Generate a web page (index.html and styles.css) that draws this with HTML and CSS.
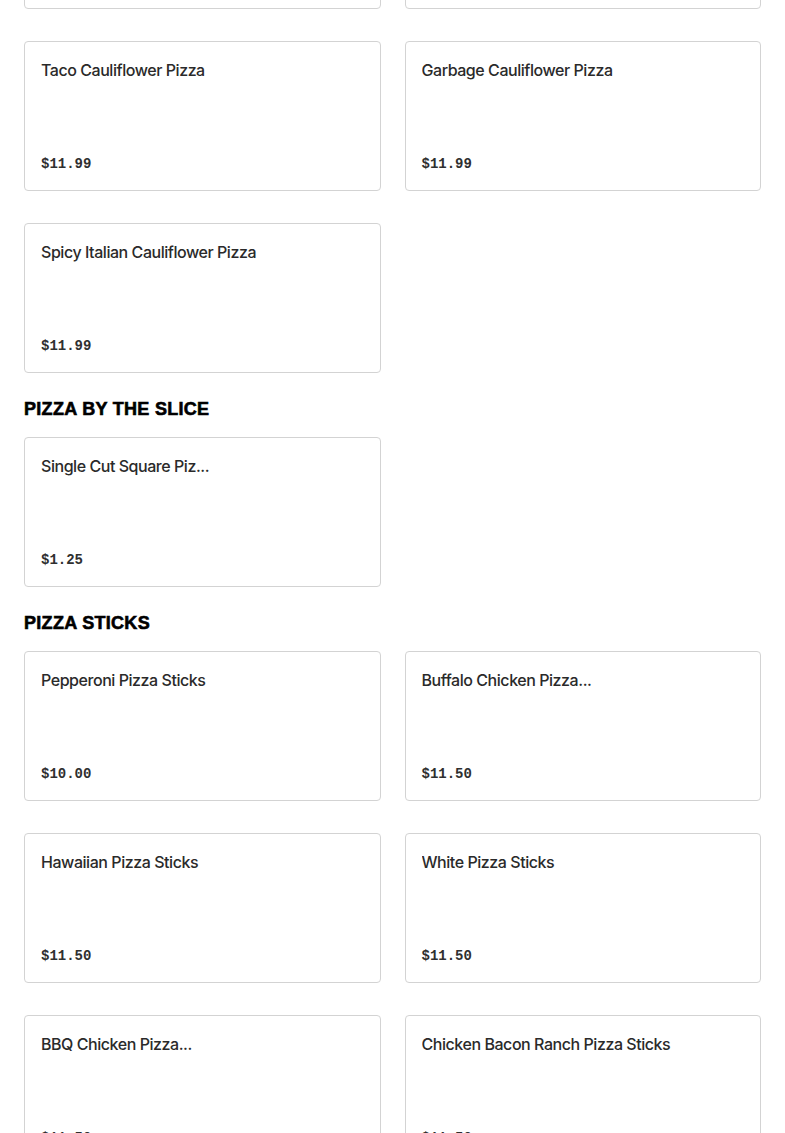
FILE: index.html
```html
<!DOCTYPE html>
<html lang="en">
<head>
<meta charset="utf-8">
<title>Menu</title>
<link rel="stylesheet" href="styles.css">
</head>
<body>
<main class="menu">
  <section class="section section-first">
    <div class="grid">
      <div class="card"><div class="title">Cauliflower Pizza</div><div class="price">$11.99</div></div>
      <div class="card"><div class="title">Veggie Cauliflower Pizza</div><div class="price">$11.99</div></div>
      <div class="card"><div class="title">Taco Cauliflower Pizza</div><div class="price">$11.99</div></div>
      <div class="card"><div class="title">Garbage Cauliflower Pizza</div><div class="price">$11.99</div></div>
      <div class="card"><div class="title">Spicy Italian Cauliflower Pizza</div><div class="price">$11.99</div></div>
    </div>
  </section>
  <section class="section">
    <h2 class="heading">PIZZA BY THE SLICE</h2>
    <div class="grid">
      <div class="card"><div class="title">Single Cut Square Piz...</div><div class="price">$1.25</div></div>
    </div>
  </section>
  <section class="section">
    <h2 class="heading">PIZZA STICKS</h2>
    <div class="grid">
      <div class="card"><div class="title">Pepperoni Pizza Sticks</div><div class="price">$10.00</div></div>
      <div class="card"><div class="title">Buffalo Chicken Pizza...</div><div class="price">$11.50</div></div>
      <div class="card"><div class="title">Hawaiian Pizza Sticks</div><div class="price">$11.50</div></div>
      <div class="card"><div class="title">White Pizza Sticks</div><div class="price">$11.50</div></div>
      <div class="card"><div class="title">BBQ Chicken Pizza...</div><div class="price">$11.50</div></div>
      <div class="card"><div class="title">Chicken Bacon Ranch Pizza Sticks</div><div class="price">$11.50</div></div>
    </div>
  </section>
</main>
</body>
</html>
```

FILE: styles.css
```css
* { box-sizing: border-box; }
html, body { margin: 0; padding: 0; background: #ffffff; }
body { font-family: Inter, "Liberation Sans", sans-serif; color: #2a2a2a; overflow: hidden; }

.menu {
  padding: 0 24px;
  margin-top: -141px;
}

.section { margin: 0; }

.heading {
  margin: 24px 0 16px;
  font-family: "Liberation Sans", Arial, sans-serif;
  font-weight: 700;
  font-size: 18px;
  line-height: 24px;
  color: #000000;
  letter-spacing: 0.3px;
  -webkit-text-stroke: 0.6px #000000;
}

.grid {
  display: grid;
  grid-template-columns: 1fr 1fr;
  column-gap: 24px;
  row-gap: 32px;
}

.card {
  height: 150px;
  border: 1px solid #d3d3d3;
  border-radius: 4px;
  padding: 16px;
  display: flex;
  flex-direction: column;
  justify-content: space-between;
  background: #fff;
}

.title {
  font-size: 16px;
  line-height: 24px;
  font-weight: 500;
  letter-spacing: -0.45px;
  color: #2a2a2a;
  white-space: nowrap;
  overflow: hidden;
}

.price {
  font-family: "Liberation Mono", "Courier New", monospace;
  font-size: 14px;
  line-height: 20px;
  font-weight: 700;
  color: #2f2f2f;
}
```
